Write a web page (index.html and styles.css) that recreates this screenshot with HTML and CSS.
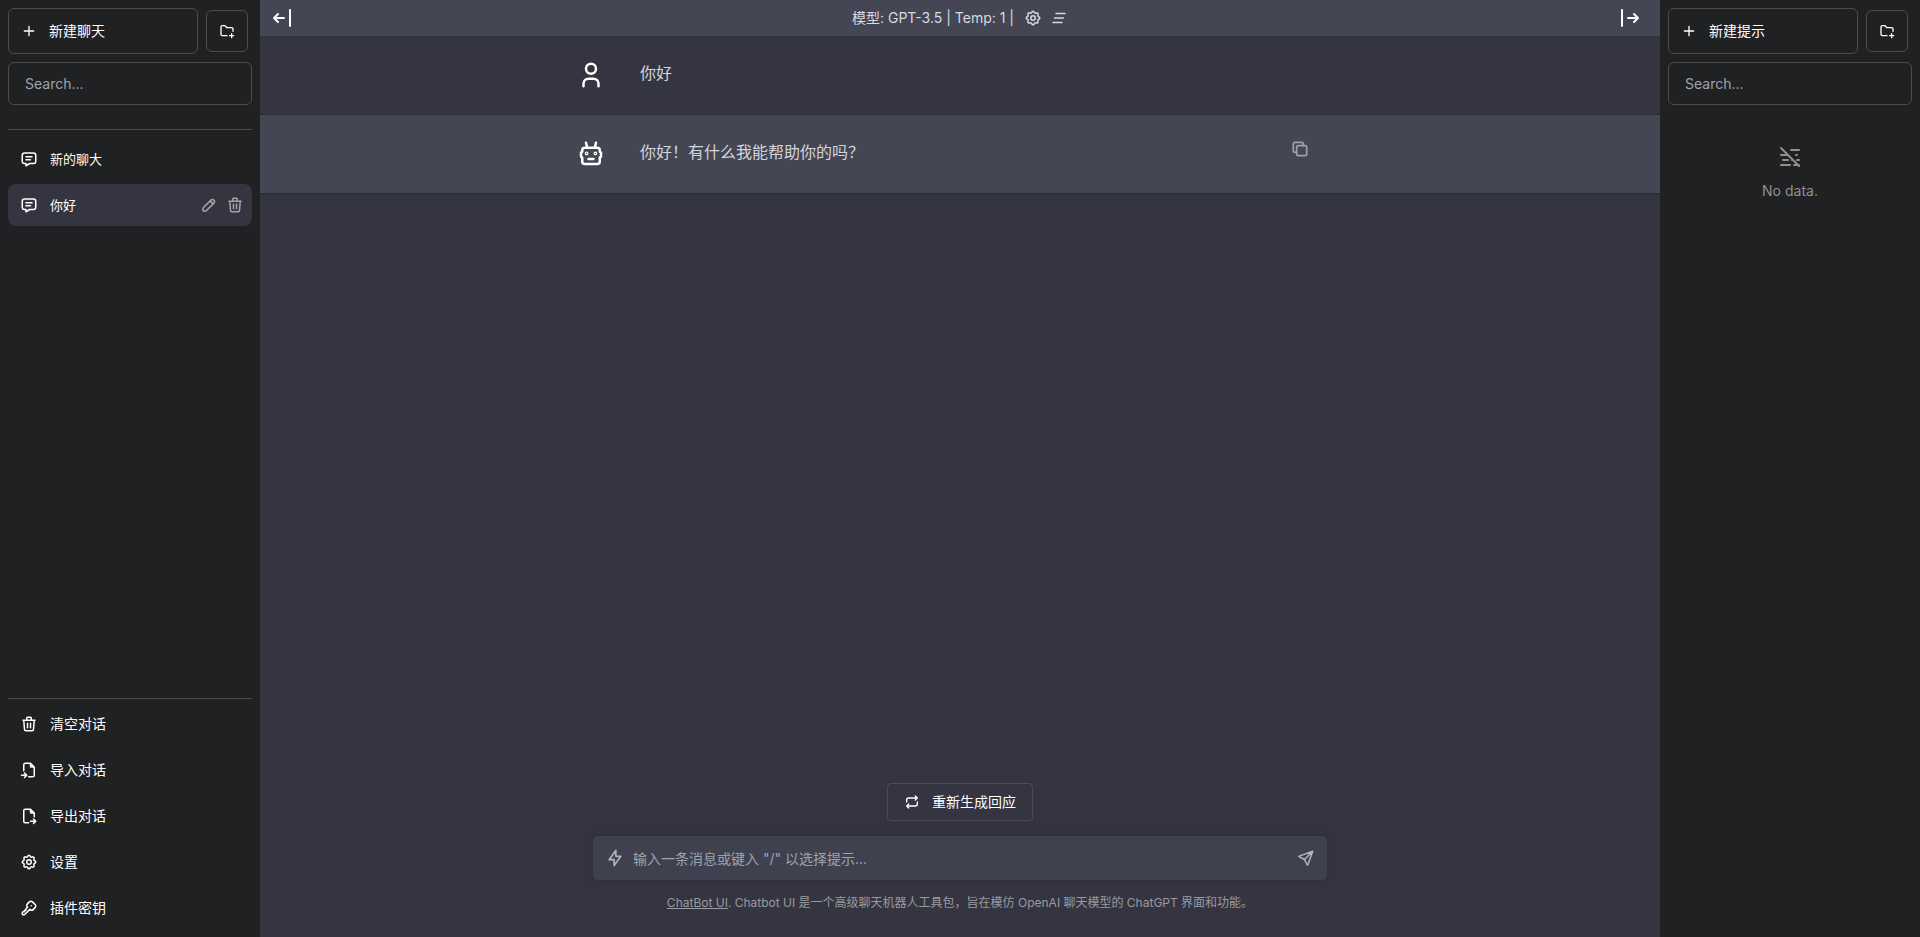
FILE: index.html
```html
<!DOCTYPE html>
<html lang="zh-CN">
<head>
<meta charset="utf-8">
<title>Chatbot UI</title>
<link rel="stylesheet" href="styles.css">
</head>
<body>
<svg class="sprite" aria-hidden="true">
  <symbol id="plus" viewBox="0 0 24 24"><path d="M12 5v14M5 12h14"/></symbol>
  <symbol id="folder-plus" viewBox="0 0 24 24"><path d="M12 19h-7a2 2 0 0 1 -2 -2v-11a2 2 0 0 1 2 -2h4l3 3h7a2 2 0 0 1 2 2v3.5M16 19h6M19 16v6"/></symbol>
  <symbol id="message" viewBox="0 0 24 24"><path d="M8 9h8M8 13h6M18 4a3 3 0 0 1 3 3v8a3 3 0 0 1 -3 3h-5l-5 3v-3h-2a3 3 0 0 1 -3 -3v-8a3 3 0 0 1 3 -3h12z"/></symbol>
  <symbol id="pencil" viewBox="0 0 24 24"><path d="M4 20h4l10.5 -10.5a1.5 1.5 0 0 0 -4 -4l-10.5 10.5v4M13.5 6.5l4 4"/></symbol>
  <symbol id="trash" viewBox="0 0 24 24"><path d="M4 7h16M10 11v6M14 11v6M5 7l1 12a2 2 0 0 0 2 2h8a2 2 0 0 0 2 -2l1 -12M9 7v-3a1 1 0 0 1 1 -1h4a1 1 0 0 1 1 1v3"/></symbol>
  <symbol id="file-import" viewBox="0 0 24 24"><path d="M14 3v4a1 1 0 0 0 1 1h4M5 13v-8a2 2 0 0 1 2 -2h7l5 5v11a2 2 0 0 1 -2 2h-5.5m-9.5 -2h7m-3 -3l3 3l-3 3"/></symbol>
  <symbol id="file-export" viewBox="0 0 24 24"><path d="M14 3v4a1 1 0 0 0 1 1h4M11.5 21h-4.5a2 2 0 0 1 -2 -2v-14a2 2 0 0 1 2 -2h7l5 5v5m-5 6h7m-3 -3l3 3l-3 3"/></symbol>
  <symbol id="settings" viewBox="0 0 24 24"><path d="M10.325 4.317c.426 -1.756 2.924 -1.756 3.35 0a1.724 1.724 0 0 0 2.573 1.066c1.543 -.94 3.31 .826 2.37 2.37a1.724 1.724 0 0 0 1.065 2.572c1.756 .426 1.756 2.924 0 3.35a1.724 1.724 0 0 0 -1.066 2.573c.94 1.543 -.826 3.31 -2.37 2.37a1.724 1.724 0 0 0 -2.572 1.065c-.426 1.756 -2.924 1.756 -3.35 0a1.724 1.724 0 0 0 -2.573 -1.066c-1.543 .94 -3.31 -.826 -2.37 -2.37a1.724 1.724 0 0 0 -1.065 -2.572c-1.756 -.426 -1.756 -2.924 0 -3.35a1.724 1.724 0 0 0 1.066 -2.573c-.94 -1.543 .826 -3.31 2.37 -2.37c1 .608 2.296 .07 2.572 -1.065z"/><circle cx="12" cy="12" r="3"/></symbol>
  <symbol id="key" viewBox="0 0 24 24"><path d="M16.555 3.843l3.602 3.602a2.877 2.877 0 0 1 0 4.069l-2.643 2.643a2.877 2.877 0 0 1 -4.069 0l-.301 -.301l-6.558 6.558a2 2 0 0 1 -1.239 .578l-.175 .008h-1.172a1 1 0 0 1 -.993 -.883l-.007 -.117v-1.172a2 2 0 0 1 .467 -1.284l.119 -.13l.414 -.414h2v-2h2v-2l2.144 -2.144l-.301 -.301a2.877 2.877 0 0 1 0 -4.069l2.643 -2.643a2.877 2.877 0 0 1 4.069 0zM15 9h.01"/></symbol>
  <symbol id="bar-left" viewBox="0 0 24 24"><path d="M4 12h10M4 12l4 4M4 12l4 -4M20 4v16"/></symbol>
  <symbol id="bar-right" viewBox="0 0 24 24"><path d="M20 12h-10M20 12l-4 4M20 12l-4 -4M4 4v16"/></symbol>
  <symbol id="clear-all" viewBox="0 0 24 24"><path d="M8 6h12M6 12h12M4 18h12"/></symbol>
  <symbol id="user" viewBox="0 0 24 24"><circle cx="12" cy="7" r="4"/><path d="M6 21v-2a4 4 0 0 1 4 -4h4a4 4 0 0 1 4 4v2"/></symbol>
  <symbol id="robot" viewBox="0 0 24 24"><path d="M7 7h10a2 2 0 0 1 2 2v1l1 1v3l-1 1v3a2 2 0 0 1 -2 2h-10a2 2 0 0 1 -2 -2v-3l-1 -1v-3l1 -1v-1a2 2 0 0 1 2 -2zM10 16h4M9 7l-1 -4M15 7l1 -4"/><circle cx="8.5" cy="11.5" r=".5"/><circle cx="15.5" cy="11.5" r=".5"/></symbol>
  <symbol id="copy" viewBox="0 0 24 24"><rect x="8" y="8" width="12" height="12" rx="2"/><path d="M16 8v-2a2 2 0 0 0 -2 -2h-8a2 2 0 0 0 -2 2v8a2 2 0 0 0 2 2h2"/></symbol>
  <symbol id="repeat" viewBox="0 0 24 24"><path d="M4 12v-3a3 3 0 0 1 3 -3h13m-3 -3l3 3l-3 3M20 12v3a3 3 0 0 1 -3 3h-13m3 3l-3 -3l3 -3"/></symbol>
  <symbol id="bolt" viewBox="0 0 24 24"><path d="M13 3v7h6l-8 11v-7h-6l8 -11"/></symbol>
  <symbol id="send" viewBox="0 0 24 24"><path d="M10 14l11 -11M21 3l-6.5 18a.55 .55 0 0 1 -1 0l-3.5 -7l-7 -3.5a.55 .55 0 0 1 0 -1l18 -6.5"/></symbol>
  <symbol id="mist-off" viewBox="0 0 24 24"><path d="M13 5h8M3 10h7M18 10h1M5 15h5M14 15h1m4 0h2M3 20h9m4 0h5M3 3l18 18"/></symbol>
</svg>

<div class="app">
  <aside class="sidebar">
    <div class="sidebar-head">
      <button class="new-button"><svg class="icon icon-16"><use href="#plus"/></svg>新建聊天</button>
      <button class="folder-button" aria-label="新建文件夹"><svg class="icon icon-16"><use href="#folder-plus"/></svg></button>
    </div>
    <input class="search" type="text" placeholder="Search..." aria-label="搜索聊天">
    <nav class="chat-list">
      <button class="row small"><svg class="icon icon-18"><use href="#message"/></svg>新的聊大</button>
      <div class="chat-item selected">
        <button class="row small"><svg class="icon icon-18"><use href="#message"/></svg>你好</button>
        <div class="row-actions">
          <button aria-label="重命名"><svg class="icon icon-18"><use href="#pencil"/></svg></button>
          <button aria-label="删除"><svg class="icon icon-18"><use href="#trash"/></svg></button>
        </div>
      </div>
    </nav>
    <div class="sidebar-foot">
      <button class="row"><svg class="icon icon-18"><use href="#trash"/></svg>清空对话</button>
      <button class="row"><svg class="icon icon-18"><use href="#file-import"/></svg>导入对话</button>
      <button class="row"><svg class="icon icon-18"><use href="#file-export"/></svg>导出对话</button>
      <button class="row"><svg class="icon icon-18"><use href="#settings"/></svg>设置</button>
      <button class="row"><svg class="icon icon-18"><use href="#key"/></svg>插件密钥</button>
    </div>
  </aside>

  <main class="chat">
    <header class="topbar">
      <button class="toggle" aria-label="收起聊天栏"><svg class="icon icon-24"><use href="#bar-left"/></svg></button>
      <div class="model">
        <span class="model-name">模型: GPT-3.5 | Temp: 1 |</span>
        <button aria-label="设置"><svg class="icon icon-18"><use href="#settings"/></svg></button>
        <button aria-label="清空"><svg class="icon icon-18"><use href="#clear-all"/></svg></button>
      </div>
      <button class="toggle toggle-right" aria-label="收起提示栏"><svg class="icon icon-24"><use href="#bar-right"/></svg></button>
    </header>

    <section class="messages">
      <article class="message">
        <div class="message-inner">
          <div class="avatar"><svg class="icon icon-30"><use href="#user"/></svg></div>
          <p class="message-text">你好</p>
        </div>
      </article>
      <article class="message assistant">
        <div class="message-inner">
          <div class="avatar"><svg class="icon icon-30"><use href="#robot"/></svg></div>
          <p class="message-text">你好！有什么我能帮助你的吗？</p>
          <button class="copy" aria-label="复制"><svg class="icon icon-20"><use href="#copy"/></svg></button>
        </div>
      </article>
    </section>

    <footer class="composer">
      <button class="regenerate"><svg class="icon icon-16"><use href="#repeat"/></svg>重新生成回应</button>
      <div class="prompt">
        <button aria-label="插件"><svg class="icon icon-20"><use href="#bolt"/></svg></button>
        <input type="text" placeholder="输入一条消息或键入 &quot;/&quot; 以选择提示..." aria-label="消息">
        <button aria-label="发送"><svg class="icon icon-18"><use href="#send"/></svg></button>
      </div>
      <p class="note"><a href="#">ChatBot UI</a>. Chatbot UI 是一个高级聊天机器人工具包，旨在模仿 OpenAI 聊天模型的 ChatGPT 界面和功能。</p>
    </footer>
  </main>

  <aside class="sidebar">
    <div class="sidebar-head">
      <button class="new-button"><svg class="icon icon-16"><use href="#plus"/></svg>新建提示</button>
      <button class="folder-button" aria-label="新建文件夹"><svg class="icon icon-16"><use href="#folder-plus"/></svg></button>
    </div>
    <input class="search" type="text" placeholder="Search..." aria-label="搜索提示">
    <div class="empty">
      <svg class="icon icon-24"><use href="#mist-off"/></svg>
      <span>No data.</span>
    </div>
  </aside>
</div>
</body>
</html>
```
FILE: styles.css
```css
* {
  box-sizing: border-box;
}

body {
  margin: 0;
  background: #343541;
  color: #fff;
  font-family: Inter, "Noto Sans CJK SC", sans-serif;
  font-size: 14px;
  line-height: 20px;
}

button,
input {
  margin: 0;
  padding: 0;
  border: 0;
  background: none;
  color: inherit;
  font: inherit;
}

button {
  display: flex;
  align-items: center;
  cursor: pointer;
}

p {
  margin: 0;
}

.sprite {
  display: none;
}

.icon {
  display: block;
  flex-shrink: 0;
  fill: none;
  stroke: currentColor;
  stroke-width: 2;
  stroke-linecap: round;
  stroke-linejoin: round;
}

.icon-16 { width: 16px; height: 16px; }
.icon-18 { width: 18px; height: 18px; }
.icon-20 { width: 20px; height: 20px; }
.icon-24 { width: 24px; height: 24px; }
.icon-30 { width: 30px; height: 30px; }

.app {
  display: flex;
  height: 100vh;
}

/* Sidebars */
.sidebar {
  display: flex;
  flex-direction: column;
  flex: 0 0 260px;
  gap: 8px;
  padding: 8px;
  background: #202123;
}

.sidebar-head {
  display: flex;
  align-items: center;
  gap: 8px;
}

.new-button {
  width: 190px;
  gap: 12px;
  padding: 12px;
  border: 1px solid #4d4d4f;
  border-radius: 6px;
}

.folder-button {
  padding: 12px;
  border: 1px solid #4d4d4f;
  border-radius: 6px;
}

.search {
  width: 100%;
  height: 43px;
  padding: 0 16px;
  border: 1px solid #4d4d4f;
  border-radius: 6px;
}

.search::placeholder,
.prompt input::placeholder {
  color: #9ca3af;
  opacity: 1;
}

.chat-list {
  display: flex;
  flex: 1;
  flex-direction: column;
  gap: 4px;
  margin-top: 16px;
  padding-top: 8px;
  border-top: 1px solid #4d4d4f;
}

.row {
  width: 100%;
  height: 42px;
  gap: 12px;
  padding: 12px;
  border-radius: 8px;
}

.small {
  font-size: 13px;
}

.chat-item {
  display: flex;
  align-items: center;
  border-radius: 8px;
}

.selected {
  background: #343541;
}

.row-actions {
  display: flex;
  gap: 8px;
  padding-right: 8px;
  color: #a3a3a3;
}

.sidebar-foot {
  display: flex;
  flex-direction: column;
  gap: 4px;
  padding-top: 4px;
  border-top: 1px solid #4d4d4f;
}

.empty {
  display: flex;
  flex-direction: column;
  align-items: center;
  gap: 12px;
  margin-top: 32px;
  color: #8f9091;
}

/* Conversation */
.chat {
  display: flex;
  flex: 1;
  flex-direction: column;
  min-width: 0;
}

.topbar {
  display: grid;
  grid-template-columns: 1fr auto 1fr;
  align-items: center;
  height: 36px;
  background: #444654;
}

.toggle {
  justify-self: start;
  margin-left: 10px;
}

.toggle-right {
  justify-self: end;
  margin-right: 18px;
}

.model {
  display: flex;
  align-items: center;
  gap: 8px;
  color: #d9d9e3;
}

.model-name {
  padding-right: 2px;
}

.messages {
  flex: 1;
}

.message {
  border-bottom: 1px solid #2b2c36;
}

.assistant {
  background: #444654;
}

.message-inner {
  display: flex;
  gap: 24px;
  width: 768px;
  max-width: 100%;
  margin: 0 auto;
  padding: 24px 0;
}

.avatar {
  width: 40px;
}

.message-text {
  flex: 1;
  color: #d1d5db;
  font-size: 16px;
  line-height: 26px;
}

.copy {
  align-self: flex-start;
  margin-right: 34px;
  color: #9ca3af;
}

.composer {
  display: flex;
  flex-direction: column;
  align-items: center;
  padding: 0 16px 24px;
}

.regenerate {
  gap: 12px;
  padding: 8px 16px;
  border: 1px solid #4d4d4f;
  border-radius: 4px;
}

.prompt {
  display: flex;
  align-items: center;
  width: 736px;
  max-width: 100%;
  gap: 8px;
  margin: 14px 0 12px;
  padding: 0 12px;
  border: 1px solid #2f303b;
  border-radius: 6px;
  background: #40414f;
  box-shadow: 0 0 15px rgba(0, 0, 0, 0.1);
  color: #b3b3b9;
}

.prompt input {
  flex: 1;
  height: 44px;
  outline: 0;
}

.note {
  color: #9a9aa0;
  font-size: 12px;
  line-height: 20px;
}

.note a {
  color: inherit;
  text-decoration: underline;
}
```
